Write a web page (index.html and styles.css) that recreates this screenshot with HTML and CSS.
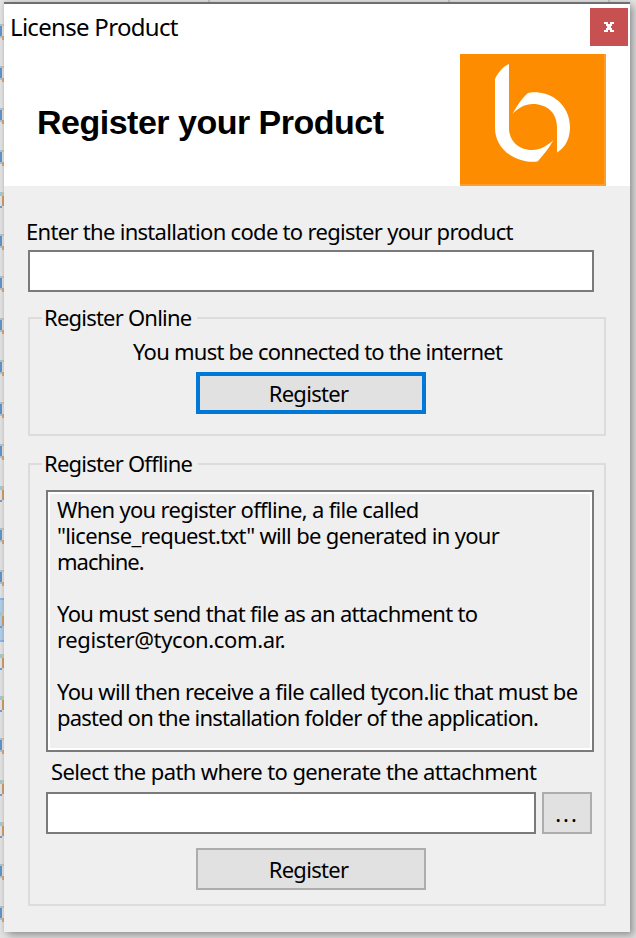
FILE: index.html
```html
<!DOCTYPE html>
<html lang="en">
<head>
<meta charset="utf-8">
<title>License Product</title>
<link rel="stylesheet" href="styles.css">
</head>
<body>
<svg class="desktop" width="636" height="938" shape-rendering="crispEdges" aria-hidden="true">
  <defs>
    <g id="a"><path fill="#dcc7a5" d="M2 0h2v2H2z"/><path fill="#9cc9df" d="M0 0h2v2H0z"/><path fill="#6593c6" d="M0 2h2v10H0z"/><path fill="#d8aa7d" d="M2 12h2v4H2z"/><path fill="#9cc9df" d="M0 12h2v2H0z"/></g>
    <g id="b"><path fill="#9cc9df" d="M0 0h2v4H0z"/><path fill="#cdd0a9" d="M2 0h2v4H2z"/><path fill="#d0a071" d="M2 4h2v10H2z"/><path fill="#6f9fd0" d="M0 14h2v2H0z"/></g>
  </defs>
  <path fill="#c4c4c4" d="M208 0h2v2h-2zM448 0h2v2h-2zM608 0h2v2h-2z"/>
  <path fill="#b1cde7" d="M0 598h4v44H0z"/><path fill="#87b8e6" d="M0 598h4v2H0zM0 640h4v2H0z"/>
  <use href="#a" y="24"/><use href="#a" y="66"/><use href="#a" y="108"/><use href="#a" y="150"/>
  <use href="#b" y="192"/><use href="#a" y="234"/><use href="#a" y="276"/><use href="#a" y="318"/>
  <use href="#a" y="360"/><use href="#a" y="402"/><use href="#a" y="444"/><use href="#b" y="486"/>
  <use href="#a" y="528"/><use href="#a" y="570"/><use href="#b" y="612"/><use href="#b" y="654"/>
  <use href="#b" y="696"/><use href="#a" y="738"/><use href="#b" y="780"/><use href="#b" y="822"/>
  <use href="#a" y="864"/><use href="#a" y="906"/>
</svg>
<main class="dialog">
  <header class="banner">
    <div class="titlebar">
      <span class="caption">License Product</span>
      <button class="close" aria-label="Close"><svg width="10" height="10" viewBox="0 0 10 10" shape-rendering="crispEdges"><path fill="#fff" d="M0 0h4v2h2V0h4v2H8v2H7v2h1v2h2v2H6V8H4v2H0V8h2V6h1V4H2V2H0z"/></svg></button>
    </div>
    <div class="hero">
      <h1>Register your Product</h1>
      <svg class="logo" width="146" height="132" viewBox="460 54 146 132"><path fill="#ff9f2b" d="M460 54h146v132H460z"/><path fill="#fd8c00" d="M460 54h144v130H460z"/><path fill="#fff" d="M509 64V128C509 141 519 150 532 150 540 150 547 146 553.500 140C549 148 544 154 538 161 536 162.500 527 162 521 160 504 155 495 142 495 128V79C498 73 502 67 509 64ZM512.500 114C517 106 521 99 528 93 531 91.500 540 92 546 94 561 99 570 112 570 127 570 138 566 147 557 152.500V127C557 113 547 104 533 104 525 104 518 108 512.500 114Z"/></svg>
    </div>
  </header>
  <section class="content">
    <label class="code-label" for="code">Enter the installation code to register your product</label>
    <input id="code" class="field code">
    <fieldset class="group online">
      <legend>Register Online</legend>
      <p class="note">You must be connected to the internet</p>
      <button class="button primary">Register</button>
    </fieldset>
    <fieldset class="group offline">
      <legend>Register Offline</legend>
      <div class="info">
        <p>When you register offline, a file called</p>
        <p>"license_request.txt" will be generated in your</p>
        <p class="short">machine.</p>
        <p class="gap">You must send that file as an attachment to</p>
        <p class="address">register@tycon.com.ar.</p>
        <p class="gap">You will then receive a file called tycon.lic that must be</p>
        <p class="last">pasted on the installation folder of the application.</p>
      </div>
      <label class="path-label" for="path">Select the path where to generate the attachment</label>
      <div class="path-row"><input id="path" class="field path"><button class="button browse">...</button></div>
      <button class="button">Register</button>
    </fieldset>
  </section>
</main>
</body>
</html>
```

FILE: styles.css
```css
* { box-sizing: border-box; }
body { margin: 0; width: 636px; height: 938px; overflow: hidden; background: #e2e2e2; font: 22px/26px "Noto Sans", sans-serif; letter-spacing: -.7px; font-variant-ligatures: none; color: #000; }
p, h1 { margin: 0; white-space: nowrap; }
label, legend { white-space: nowrap; }
.desktop { position: absolute; left: 0; top: 0; }
.dialog { position: relative; width: 626px; height: 930px; margin: 2px 0 0 4px; background: #efefef; box-shadow: 4px 4px 8px rgba(0,0,0,.3), 0 0 4px rgba(0,0,0,.12); }
.banner { height: 184px; background: #fff; border-top: 2px solid #6f6f71; }
.titlebar { height: 50px; display: flex; justify-content: space-between; padding: 4px 2px 0 6px; }
.caption { font-size: 24px; line-height: 38px; }
.close { width: 38px; height: 38px; padding: 0; border: 0; background: #c75050; display: flex; align-items: center; justify-content: center; }
.hero { display: flex; justify-content: space-between; padding: 0 24px 0 33px; }
h1 { font: bold 34px/40px "Liberation Sans", sans-serif; letter-spacing: -.5px; margin-top: 48px; }
.logo { display: block; }
.content { display: flex; flex-direction: column; align-items: flex-start; padding: 32px 24px 0; }
.code-label { margin: 0 0 6px -2px; }
.field { display: block; height: 42px; border: 2px solid #7a7a7a; background: #fff; padding: 4px; outline: 0; }
.code { width: 566px; }
.group { width: 578px; min-width: 0; margin: 0; border: 2px solid #dcdcdc; display: flex; flex-direction: column; padding: 0; }
legend { padding: 0 6px 2px 2px; margin-left: 12px; height: 26px; line-height: 24px; letter-spacing: -.78px; }
.online { height: 131px; margin-top: 13px; }
.offline { height: 455px; margin-top: 15px; }
.note { margin: 7px 0 8px 103px; letter-spacing: -.75px; }
.button { width: 230px; height: 42px; margin-left: 166px; padding: 0 5px 0 0; border: 2px solid #adadad; background: #e1e1e1; font: inherit; letter-spacing: inherit; color: #000; }
.primary { border: 4px solid #0078d7; }
.info { width: 548px; height: 262px; margin: 13px 0 0 16px; padding: 4px 9px; border: 2px solid #7a7a7a; box-shadow: inset 0 0 0 2px #fff; letter-spacing: -.67px; }
.short { letter-spacing: -1px; }
.address { letter-spacing: -.38px; }
.last { letter-spacing: -.77px; }
.gap { margin-top: 26px; }
.path-label { margin: 7px 0 7px 21px; letter-spacing: -.61px; position: relative; top: -1px; }
.path-row { display: flex; gap: 6px; margin: 0 0 14px 16px; }
.path { width: 490px; }
.browse { width: 50px; margin: 0; letter-spacing: 2px; padding: 0; }
```
